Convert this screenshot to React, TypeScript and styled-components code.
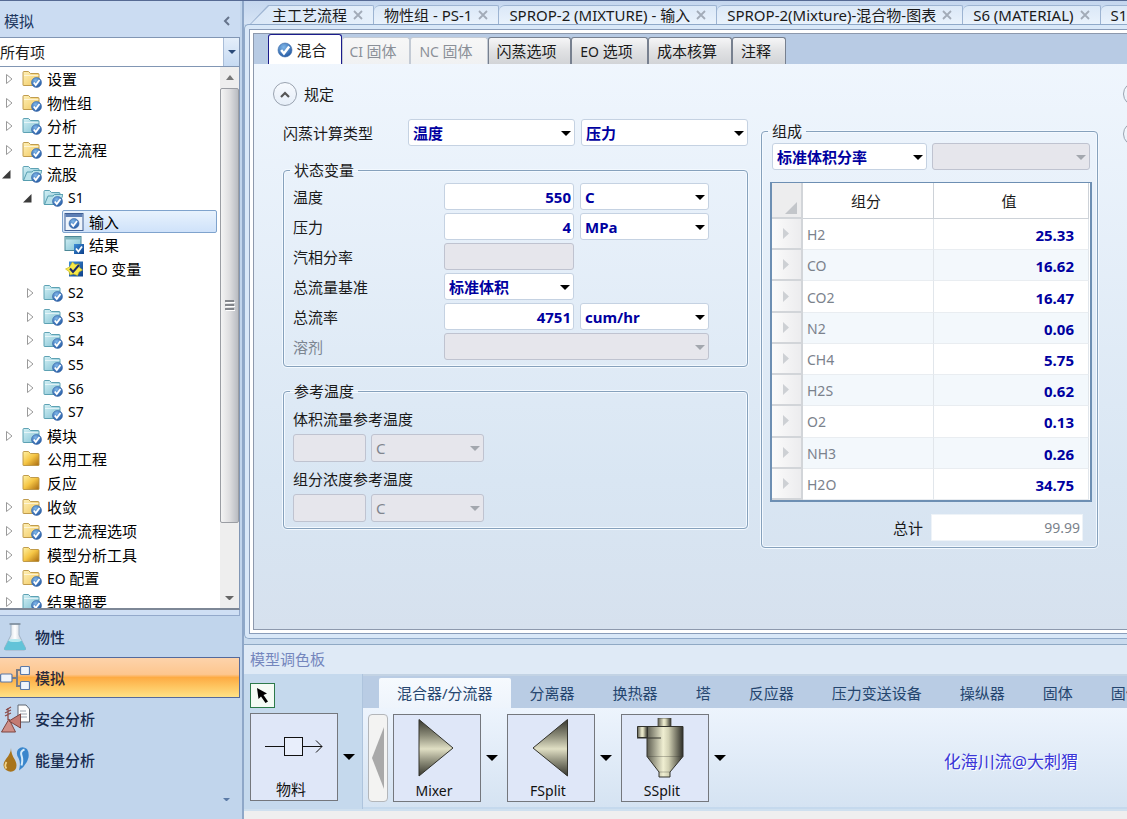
import React, { useState } from 'react';
import styled, { createGlobalStyle, css } from 'styled-components';

const GlobalStyle = createGlobalStyle`
  *, *::before, *::after { box-sizing: border-box; }
  body {
    margin: 0;
    font-family: "Noto Sans", "Noto Sans CJK SC", sans-serif;
    font-size: 15px;
    line-height: 20px;
    color: #1a1a1a;
    background: #c3d6ec;
    overflow: hidden;
  }
  button, input, select { font: inherit; color: inherit; margin: 0; }
  button { background: none; border: 0; padding: 0; cursor: default; }
  ul { list-style: none; margin: 0; padding: 0; }
  svg { display: block; flex: none; }
`;

/* ---------- mixed Latin / Chinese text ---------- */

const Latin = styled.span`
  font-size: 14px;
`;

function Mixed({ text }: { text: string }) {
  const parts = text.split(/([\x20-\x7e]+)/).filter(Boolean);
  return (
    <span>
      {parts.map((p, i) => (/^[\x20-\x7e]/.test(p) ? <Latin key={i}>{p}</Latin> : p))}
    </span>
  );
}

/* ---------- icons ---------- */

function Gradients() {
  return (
    <svg width="0" height="0" style={{ position: 'absolute' }} aria-hidden="true">
      <defs>
        <linearGradient id="g-yellow" x1="0" y1="0" x2="1" y2="1">
          <stop offset="0" stopColor="#fff1b8" />
          <stop offset="1" stopColor="#f0c65c" />
        </linearGradient>
        <linearGradient id="g-gold" x1="0" y1="0" x2="1" y2="1">
          <stop offset="0" stopColor="#fff3a8" />
          <stop offset="0.5" stopColor="#f5c544" />
          <stop offset="1" stopColor="#a86a10" />
        </linearGradient>
        <linearGradient id="g-cyan" x1="0" y1="0" x2="1" y2="1">
          <stop offset="0" stopColor="#d5f1f5" />
          <stop offset="1" stopColor="#7dbfd2" />
        </linearGradient>
        <radialGradient id="g-ball" cx="0.4" cy="0.3" r="0.8">
          <stop offset="0" stopColor="#7fb6e8" />
          <stop offset="1" stopColor="#1a4f9c" />
        </radialGradient>
        <linearGradient id="g-blue" x1="0" y1="0" x2="1" y2="1">
          <stop offset="0" stopColor="#3f8fd8" />
          <stop offset="1" stopColor="#0c3f8a" />
        </linearGradient>
        <linearGradient id="g-coneV" x1="0" y1="0" x2="0" y2="1">
          <stop offset="0" stopColor="#36362e" />
          <stop offset="0.28" stopColor="#8b8b78" />
          <stop offset="0.52" stopColor="#e0dfc4" />
          <stop offset="0.75" stopColor="#8b8b78" />
          <stop offset="1" stopColor="#36362e" />
        </linearGradient>
        <linearGradient id="g-metal" x1="0" y1="0" x2="1" y2="0">
          <stop offset="0" stopColor="#5c5c50" />
          <stop offset="0.45" stopColor="#f0efd2" />
          <stop offset="0.6" stopColor="#d2d1b4" />
          <stop offset="1" stopColor="#2e2e28" />
        </linearGradient>
        <linearGradient id="g-glass" x1="0" y1="0" x2="1" y2="0">
          <stop offset="0" stopColor="#aebccc" />
          <stop offset="0.5" stopColor="#ffffff" />
          <stop offset="1" stopColor="#9fafc2" />
        </linearGradient>
      </defs>
    </svg>
  );
}

type IconKind = 'yellow' | 'gold' | 'cyan' | 'open' | 'form' | 'result' | 'eo';

const Check = ({ cx, cy, r }: { cx: number; cy: number; r: number }) => (
  <g>
    <circle cx={cx} cy={cy} r={r} fill="url(#g-ball)" stroke="#3a6aa8" strokeWidth="0.6" />
    <path
      d={`M${cx - r * 0.55} ${cy}l${r * 0.4} ${r * 0.5}L${cx + r * 0.6} ${cy - r * 0.5}`}
      fill="none"
      stroke="#fff"
      strokeWidth={r * 0.36}
    />
  </g>
);

function TreeIcon({ kind }: { kind: IconKind }) {
  const stroke = kind === 'yellow' || kind === 'gold' ? '#b9923f' : '#4f98ac';
  if (kind === 'form')
    return (
      <svg width="20" height="18" viewBox="0 0 20 18">
        <rect x="1" y="0.5" width="18" height="17" fill="#eef4fb" stroke="#3f5f94" />
        <rect x="1.5" y="1" width="17" height="3" fill="#5d7fb5" />
        <Check cx={10} cy={10.5} r={5} />
      </svg>
    );
  if (kind === 'result')
    return (
      <svg width="20" height="18" viewBox="0 0 20 18">
        <rect x="1" y="0.5" width="16" height="14" fill="url(#g-cyan)" stroke="#4b8796" />
        <rect x="1.5" y="1" width="15" height="2.5" fill="#7fb5bd" />
        <rect x="10" y="8" width="10" height="10" fill="url(#g-blue)" />
        <path d="M12 12.5l2.4 3L18 10.5" fill="none" stroke="#fff" strokeWidth="1.8" />
      </svg>
    );
  if (kind === 'eo')
    return (
      <svg width="20" height="18" viewBox="0 0 20 18">
        <rect x="5" y="1.500" width="14" height="15" fill="url(#g-blue)" />
        <path
          d="M8.500 2l2.500 2.500 4-.5.500 3.500 3 2.500-3.500 2-1.500 3.500-4-1.500-3.500 1-1-3.500L1.500 9l4-2z"
          fill="#f7e948"
          stroke="#c9b414"
          strokeWidth="0.6"
        />
        <path d="M6 8.500l3 3.500 6-7" fill="none" stroke="#1d2b66" strokeWidth="2" />
      </svg>
    );
  return (
    <svg width="20" height="18" viewBox="0 0 20 18">
      <path
        d="M1 2.500q0-1 1-1h4.500l2 2H16q1 0 1 1V15q0 .5-.5.5h-15Q1 15.500 1 15z"
        fill={kind === 'gold' ? 'url(#g-gold)' : kind === 'yellow' ? 'url(#g-yellow)' : 'url(#g-cyan)'}
        stroke={stroke}
        strokeWidth="0.9"
      />
      {kind === 'open' && (
        <path d="M1.500 15.500L5 7h5l1.500-1.500H20l-3.500 10z" fill="#b9e2ea" stroke={stroke} strokeWidth="0.9" />
      )}
      {kind !== 'gold' && kind !== 'open' && <path d="M2 5.500h14.500" stroke="#fff" strokeOpacity="0.6" />}
      {kind !== 'gold' && <Check cx={14.5} cy={12.5} r={5} />}
    </svg>
  );
}

const Caret = ({ w = 10, color = '#000' }: { w?: number; color?: string }) => (
  <svg width={w} height={w / 2} viewBox="0 0 10 5">
    <path d="M0 0h10L5 5z" fill={color} />
  </svg>
);

const Cross = () => (
  <svg width="10" height="10" viewBox="0 0 10 10">
    <path d="M1 1l8 8M9 1l-8 8" stroke="#a2abb8" strokeWidth="1.8" fill="none" />
  </svg>
);

/* ---------- page shell ---------- */

const Shell = styled.div`
  display: grid;
  grid-template-columns: 244px minmax(0, 1fr);
  height: 100vh;
  border-top: 1px solid #566a94;
`;

const Sidebar = styled.aside`
  display: flex;
  flex-direction: column;
  min-height: 0;
  background: #c1d5ec;
  border-right: 2px solid #8ea7c8;
  padding-right: 2px;
`;

const SideHeader = styled.header`
  display: flex;
  align-items: center;
  justify-content: space-between;
  height: 36px;
  padding: 3px 10px 0 4px;
  background: #cbdcf2;
  color: #20375f;
  flex: none;
`;

const FilterBox = styled.label`
  position: relative;
  display: block;
  height: 30px;
  flex: none;
  border: 1px solid #8196b4;
  border-left: 0;
  background: #fff;
  select {
    appearance: none;
    width: 100%;
    height: 28px;
    border: 0;
    outline: 0;
    padding: 0 20px 0 0;
    background: transparent;
  }
`;

const FilterArrow = styled.span`
  position: absolute;
  top: 0;
  right: 0;
  width: 16px;
  height: 28px;
  display: grid;
  place-items: center;
  border-left: 1px solid #a9bdd8;
  background: linear-gradient(#e4eefa, #c6daf2);
  pointer-events: none;
`;

const TreeArea = styled.div`
  display: flex;
  flex: 1;
  min-height: 0;
  overflow: hidden;
  background: #fff;
  border-right: 1px solid #8196b4;
  border-bottom: 2px solid #7d8796;
`;

const TreeList = styled.ul`
  flex: 1;
  min-width: 0;
  height: 547px;
  display: grid;
  grid-auto-rows: 1fr;
  padding-right: 3px;
`;

const TreeRow = styled.li<{ $level: number }>`
  display: flex;
  align-items: stretch;
  padding-left: ${(p) => p.$level * 21}px;
  white-space: nowrap;
  min-height: 0;
`;

const Twisty = styled.button`
  width: 20px;
  display: grid;
  align-items: center;
  padding-left: 5px;
  flex: none;
`;

const TreeLabel = styled.button<{ $on?: boolean }>`
  display: flex;
  align-items: center;
  gap: 5px;
  padding: 0 8px 0 1px;
  border: 1px solid transparent;
  border-radius: 2px;
  text-align: left;
  color: #000;
  ${(p) =>
    p.$on &&
    css`
      flex: 1;
      border-color: #7fa3cd;
      background: linear-gradient(#e8f2fd, #cfe2fa);
    `}
`;

const ScrollTrack = styled.div`
  width: 19px;
  display: flex;
  flex-direction: column;
  align-items: center;
  background: #eeeeee;
  padding-bottom: 8px;
  gap: 8px;
`;

const ScrollThumb = styled.div`
  width: 19px;
  flex: 0 1 435px;
  border: 1px solid #9a9da3;
  border-radius: 2px;
  background: linear-gradient(90deg, #f4f4f4, #dedee0 50%, #b9bcc2);
  display: grid;
  place-items: center;
`;

const ScrollEnd = styled.span<{ $grow?: boolean }>`
  display: flex;
  align-items: flex-end;
  height: 13px;
  flex: ${(p) => (p.$grow ? '1 0 13px' : 'none')};
`;

const Splitter = styled.div`
  height: 6px;
  flex: none;
  border: 1px solid #93a9cb;
  border-width: 0 1px 1px 0;
  background: #cfdff4;
`;

const ModeNav = styled.nav`
  flex: none;
  display: flex;
  flex-direction: column;
`;

const ModeButton = styled.button<{ $on?: boolean }>`
  display: flex;
  align-items: center;
  gap: 5px;
  height: 41px;
  font-weight: 500;
  color: #16294d;
  border: 1px solid transparent;
  border-left: 0;
  ${(p) =>
    p.$on &&
    css`
      color: #2c2a3a;
      border-color: #54699b;
      background: linear-gradient(#fdd3ab, #fdc68e 42%, #fdab43 50%, #fec45f 72%, #fee186);
    `}
`;

const NavFoot = styled.div`
  height: 39px;
  display: flex;
  justify-content: flex-end;
  align-items: center;
  padding-right: 10px;
`;

/* ---------- document area ---------- */

const Main = styled.main`
  display: flex;
  flex-direction: column;
  min-width: 0;
  min-height: 0;
  overflow: hidden;
  background: #c9dbee;
`;

const DocTabs = styled.div`
  display: flex;
  flex: none;
  height: 23px;
  padding: 4px 0 0 6px;
  background: linear-gradient(#c4d6ee, #d6e4f5);
`;

const DocTab = styled.div<{ $first?: boolean }>`
  display: flex;
  flex: none;
  align-items: center;
  gap: 6px;
  padding: 0 10px;
  white-space: nowrap;
  border: 1px solid #9db4d2;
  border-width: 1px 1px 0 0;
  border-radius: 6px 2px 0 0;
  background: linear-gradient(#dbe8f7, #e9f2fc);
  ${(p) =>
    p.$first &&
    css`
      padding-left: 22px;
      border-top-left-radius: 0;
      clip-path: polygon(18px 0, 100% 0, 100% 100%, 0 100%);
      background: linear-gradient(135deg, #9db4d2 13px, #dbe8f7 14px, #e6f0fb);
    `}
`;

const DocFrame = styled.section`
  flex: 1;
  min-height: 0;
  display: flex;
  border: 1px solid #8fa9c9;
  border-right: 0;
  border-radius: 5px 0 0 5px;
  background: #d9e8f8;
  padding: 4px 0 4px 4px;
`;

const DocRing = styled.div`
  flex: 1;
  min-width: 0;
  display: flex;
  border: 1px solid #8a9dba;
  border-right: 0;
  background: #fff;
  padding: 3px 0 3px 3px;
`;

const DocBody = styled.div`
  flex: 1;
  min-width: 0;
  display: flex;
  flex-direction: column;
  overflow: hidden;
  border: 1px solid #8d99ad;
  border-right: 0;
  background: linear-gradient(#f1f7fe, #d9e6f3 75%, #d6e1ee);
`;

const FormTabs = styled.div`
  display: flex;
  flex: none;
  align-items: flex-end;
  height: 30px;
  padding-left: 14px;
  background: #b8cbe4;
`;

const FormTab = styled.button<{ $state?: 'on' | 'off'; $w: number }>`
  display: flex;
  align-items: center;
  justify-content: center;
  gap: 3px;
  width: ${(p) => p.$w}px;
  height: 27px;
  padding-right: 6px;
  border: 1px solid #77808f;
  border-width: 1px 1px 0 1px;
  border-radius: 3px 3px 0 0;
  background: linear-gradient(#f6f6f7, #e2e3e5 45%, #d2d4d7);
  color: #1a1a1a;
  white-space: nowrap;
  ${(p) =>
    p.$state === 'on' &&
    css`
      height: 30px;
      border-color: #1c1c8c;
      background: #fff;
    `}
  ${(p) =>
    p.$state === 'off' &&
    css`
      border-color: #c3cad4;
      background: linear-gradient(#f7f7f7, #f0f1f2);
      color: #8b9098;
    `}
`;

const Form = styled.div`
  flex: 1;
  padding: 18px 0 0 19px;
`;

const SectionHead = styled.div`
  display: flex;
  align-items: center;
`;

const Round = styled.button<{ $rail?: boolean }>`
  width: 24px;
  height: 24px;
  flex: none;
  display: grid;
  place-items: center;
  border: 1px solid #9aa3b0;
  border-radius: 50%;
  background: linear-gradient(#f7fafe, #e6eef8);
  ${(p) => p.$rail && 'margin-left: 25px;'}
`;

const HeadText = styled.span`
  width: 801px;
  padding-left: 7px;
  flex: none;
`;

const Columns = styled.div`
  display: flex;
  align-items: flex-start;
  padding: 13px 0 0 10px;
`;

const LeftColumn = styled.div`
  width: 465px;
  flex: none;
  display: flex;
  flex-direction: column;
  gap: 14px;
`;

const FlashRow = styled.div`
  display: grid;
  grid-template-columns: 119px 1fr 1fr;
  gap: 6px;
  align-items: center;
`;

const Group = styled.fieldset`
  margin: 0;
  min-width: 0;
  padding: 3px 8px 6px 6px;
  border: 1px solid #86a1bc;
  border-radius: 4px;
  box-shadow: 0 0 0 1px #f3f9ff, inset 0 0 0 1px #f3f9ff;
  legend {
    padding: 0 4px;
    line-height: 20px;
  }
`;

const StateGrid = styled.div`
  display: grid;
  grid-template-columns: 145px 130px 129px;
  gap: 3px 6px;
  align-items: center;
  padding-left: 3px;
`;

const RefBlock = styled.div`
  padding: 0 3px;
  label {
    display: block;
    line-height: 30px;
  }
`;

const RefFields = styled.div`
  display: grid;
  grid-template-columns: 73px 113px;
  gap: 5px;
  padding-bottom: 2px;
  &:last-child { padding-bottom: 0; }
  input, select { height: 28px; }
`;

const FieldLabel = styled.label<{ $dim?: boolean }>`
  color: ${(p) => (p.$dim ? '#7c8590' : '#1a1a1a')};
`;

const fieldLook = css<{ $dim?: boolean }>`
  width: 100%;
  height: 27px;
  border: 1px solid ${(p) => (p.$dim ? '#bfc3d0' : '#c5d2e2')};
  border-radius: 3px;
  background: ${(p) => (p.$dim ? '#e6e6ec' : '#fff')};
  color: ${(p) => (p.$dim ? '#80858e' : '#0000a0')};
  font-weight: ${(p) => (p.$dim ? 400 : 700)};
  outline: 0;
  opacity: 1;
`;

const NumberField = styled.input<{ $dim?: boolean }>`
  ${fieldLook}
  text-align: right;
  padding: 0 2px;
`;

const SelectField = styled.select<{ $dim?: boolean }>`
  ${fieldLook}
  display: block;
  appearance: none;
  padding: 0 18px 0 4px;
`;

const SelectWrap = styled.span<{ $span?: boolean }>`
  position: relative;
  display: block;
  ${(p) => p.$span && 'grid-column: span 2;'}
  svg {
    position: absolute;
    right: 4px;
    top: 12px;
    pointer-events: none;
  }
`;

function Drop({ id, value, label, dim, span }: { id?: string; value?: string; label?: string; dim?: boolean; span?: boolean }) {
  return (
    <SelectWrap $span={span}>
      <SelectField id={id} aria-label={label} $dim={dim} disabled={dim}>
        <option>{value ?? ''}</option>
      </SelectField>
      <Caret color={dim ? '#a3a7ae' : '#000'} />
    </SelectWrap>
  );
}

const Composition = styled(Group)`
  width: 337px;
  flex: none;
  margin: 2px 0 0 13px;
  padding: 2px 5px 6px 6px;
`;

const CompSelects = styled.div`
  display: grid;
  grid-template-columns: 155px 158px;
  gap: 5px;
  padding: 0 0 12px 4px;
`;

const TableBox = styled.div`
  margin-left: 2px;
  border: 2px solid #6d8fb3;
  border-width: 1px 2px 2px 2px;
  background: #fff;
  padding-right: 1px;
`;

const Table = styled.table`
  width: 100%;
  height: 317px;
  table-layout: fixed;
  border-collapse: separate;
  border-spacing: 0;
  color: #7b828c;
  th {
    height: 36px;
    padding: 0 4px 0 0;
    font-weight: 400;
    color: #1a1a1a;
    border-right: 1px solid #cdd2d8;
    border-bottom: 1px solid #cdd2d8;
  }
  td {
    padding: 2px 0 0 4px;
    font-size: 14px;
    border-right: 1px solid #e1e6eb;
    border-bottom: 1px solid #e9edf1;
  }
  tbody tr:nth-child(even) td { background: #f3f8fc; }
  td:last-child {
    padding: 2px 14px 0 0;
    text-align: right;
    font-size: 15px;
    font-weight: 700;
    color: #0000a0;
  }
  th:first-child, tbody tr td:first-child {
    padding: 0 0 0 10px;
    background: linear-gradient(90deg, #fbfbfb, #ececee);
    border-right: 2px solid #d2d5d9;
    border-bottom: 2px solid #d2d5d9;
  }
  th:first-child { background: #ededee; }
`;

const TotalRow = styled.div`
  display: flex;
  justify-content: flex-end;
  align-items: center;
  gap: 8px;
  padding: 12px 9px 0 0;
  input {
    width: 152px;
    height: 27px;
    border: 1px solid #eef3f8;
    background: #fff;
    text-align: right;
    padding: 0 2px;
    font-size: 14px;
    color: #7b828c;
    outline: 0;
  }
`;

const Rail = styled.div`
  padding-top: 3px;
`;

/* ---------- model palette ---------- */

const Palette = styled.section`
  flex: none;
  margin-top: 5px;
  border-top: 1px solid #8fa9c4;
  border-bottom: 8px solid #efefef;
`;

const PaletteTitle = styled.header`
  height: 29px;
  padding: 4px 6px 0;
  background: #dfeaf6;
  color: #7486bd;
`;

const PaletteBody = styled.div`
  display: flex;
  background: #c5d9ed;
  border-bottom: 2px solid #cfe0ef;
`;

const StreamSide = styled.div`
  width: 118px;
  flex: none;
  padding: 9px 0 8px 6px;
  display: flex;
  flex-direction: column;
  gap: 5px;
`;

const PointerButton = styled.button`
  width: 25px;
  height: 25px;
  border: 1px solid #2c7a4a;
  background: #f4fbf5;
  display: grid;
  place-items: center;
`;

const ModelRow = styled.div`
  display: flex;
  align-items: center;
`;

const ModelButton = styled.button`
  width: 88px;
  height: 88px;
  flex: none;
  display: flex;
  flex-direction: column;
  align-items: center;
  border: 1px solid #74777d;
  background: #dfe7f8;
  padding-right: 6px;
  color: #111;
  svg { margin: 3px -6px 2px 0; }
`;

const ModelDrop = styled.button`
  width: 26px;
  height: 88px;
  display: grid;
  place-items: center;
  flex: none;
  padding-right: 4px;
`;

const Library = styled.div`
  flex: 1;
  min-width: 0;
  border-left: 1px solid #aec4dd;
`;

const LibTabs = styled.div`
  display: flex;
  align-items: flex-end;
  height: 34px;
  padding-left: 16px;
  background: #b9cce4;
  border-top: 2px solid #c3d3e4;
  overflow: hidden;
`;

const LibTab = styled.button<{ $on?: boolean }>`
  height: 30px;
  flex: none;
  padding: 0 ${(p) => (p.$on ? 18 : 19)}px;
  white-space: nowrap;
  color: #25466f;
  ${(p) =>
    p.$on &&
    css`
      background: linear-gradient(#f6fafe, #eef4fc);
      border-radius: 2px 2px 0 0;
    `}
`;

const LibPanel = styled.div`
  display: flex;
  align-items: center;
  height: 99px;
  padding: 0 0 0 5px;
  background: linear-gradient(#edf4fd, #d5e3f2);
`;

const PageBack = styled.button`
  width: 20px;
  height: 88px;
  flex: none;
  margin-right: 5px;
  display: grid;
  place-items: center;
  border: 1px solid #b3b6ba;
  border-radius: 4px;
  background: #f3f3f2;
`;

const Signature = styled.span`
  margin-left: auto;
  padding: 8px 49px 0 0;
  font-size: 17px;
  color: #3a36d8;
  text-shadow: 1px 1px 0 #fff;
  white-space: nowrap;
`;

/* ---------- data ---------- */

const TREE: [string, number, IconKind, 'closed' | 'open' | 'leaf'][] = [
  ['设置', 0, 'yellow', 'closed'],
  ['物性组', 0, 'yellow', 'closed'],
  ['分析', 0, 'cyan', 'closed'],
  ['工艺流程', 0, 'yellow', 'closed'],
  ['流股', 0, 'open', 'open'],
  ['S1', 1, 'open', 'open'],
  ['输入', 2, 'form', 'leaf'],
  ['结果', 2, 'result', 'leaf'],
  ['EO 变量', 2, 'eo', 'leaf'],
  ['S2', 1, 'cyan', 'closed'],
  ['S3', 1, 'cyan', 'closed'],
  ['S4', 1, 'cyan', 'closed'],
  ['S5', 1, 'cyan', 'closed'],
  ['S6', 1, 'cyan', 'closed'],
  ['S7', 1, 'cyan', 'closed'],
  ['模块', 0, 'cyan', 'closed'],
  ['公用工程', 0, 'gold', 'leaf'],
  ['反应', 0, 'gold', 'leaf'],
  ['收敛', 0, 'yellow', 'closed'],
  ['工艺流程选项', 0, 'yellow', 'closed'],
  ['模型分析工具', 0, 'gold', 'closed'],
  ['EO 配置', 0, 'yellow', 'closed'],
  ['结果摘要', 0, 'cyan', 'closed'],
];

const DOCS = ['主工艺流程', '物性组 - PS-1', 'SPROP-2 (MIXTURE) - 输入', 'SPROP-2(Mixture)-混合物-图表', 'S6 (MATERIAL)', 'S1'];

const COMPONENTS = [
  ['H2', '25.33'],
  ['CO', '16.62'],
  ['CO2', '16.47'],
  ['N2', '0.06'],
  ['CH4', '5.75'],
  ['H2S', '0.62'],
  ['O2', '0.13'],
  ['NH3', '0.26'],
  ['H2O', '34.75'],
];

const LIBRARY = ['混合器/分流器', '分离器', '换热器', '塔', '反应器', '压力变送设备', '操纵器', '固体', '固体'];

/* ---------- larger drawings ---------- */

const Flask = () => (
  <svg width="30" height="30" viewBox="0 0 30 30">
    <path d="M11 2v11L4.500 26q-.8 2 1.500 2h18q2.300 0 1.500-2L19 13V2z" fill="url(#g-glass)" stroke="#95a8bd" strokeWidth="0.8" />
    <path d="M8.500 18.500h13l4 7.500q.8 2-1.500 2H6q-2.300 0-1.500-2z" fill="#62c3d8" />
    <ellipse cx="15" cy="18.500" rx="6.500" ry="1.600" fill="#b7e8ef" />
    <path d="M9.500 2h11" stroke="#7d8c9c" strokeWidth="1.600" />
  </svg>
);

const Flowsheet = () => (
  <svg width="30" height="30" viewBox="0 0 30 30">
    <path d="M12 15h5M21 7h-4v16h4" fill="none" stroke="#7d7d84" strokeWidth="2" />
    <g fill="#f1f5fb" stroke="#5b79a8" strokeWidth="1.200">
      <rect x="0.600" y="11" width="11.400" height="8" rx="1" />
      <rect x="20.500" y="3.500" width="9" height="8" rx="1" />
      <rect x="20.500" y="18.500" width="9" height="8" rx="1" />
    </g>
  </svg>
);

const Safety = () => (
  <svg width="30" height="30" viewBox="0 0 30 30">
    <path d="M18 1h8l3.500 4v13H18z" fill="#fdfdfd" stroke="#5e6672" />
    <path d="M20 7h6M20 10h7M20 13h7" stroke="#9aa3b0" />
    <path d="M8 16V4M5 12l6-3M5 9l6-3M6 6l5-3" stroke="#8b4a48" strokeWidth="1.300" />
    <path d="M9 15l-7.500 13h14z" fill="#cf8f88" stroke="#7c4441" />
    <path d="M9 17l11.500-7v14z" fill="#c37a72" stroke="#7c4441" />
  </svg>
);

const Energy = () => (
  <svg width="30" height="30" viewBox="0 0 30 30">
    <path d="M11 3q0 5-5 11-5 7 0 11 5 3.500 9 0 3-4 0-10-4-6-4-12z" fill="#a8741c" />
    <path d="M6.500 17q-2.500 4 0 6.500" fill="none" stroke="#f0d28c" strokeWidth="1.800" />
    <path d="M27 4q-5-3.500-9 .5-2.500 4 .5 8.500 2.500 5 .5 12.500 7.500-5 9.500-13 .8-5-1.500-8.500z" fill="#3a86cc" />
    <path d="M24.500 4.500q-4.500 1.500-3 6 1.500 4.500 0 10" fill="none" stroke="#d4ebfb" strokeWidth="2" />
  </svg>
);

const StreamDrawing = () => (
  <svg width="60" height="60" viewBox="0 0 60 60">
    <path d="M1 29.500h20M39 29.500h19M52 23.500l6 6-6 6" fill="none" stroke="#111" />
    <rect x="20.500" y="20.500" width="18" height="18" fill="#e8eefb" stroke="#111" />
  </svg>
);

const MixerDrawing = () => (
  <svg width="60" height="60" viewBox="0 0 60 60">
    <path d="M12 1.500L46 30 12 58z" fill="url(#g-coneV)" stroke="#33332c" />
  </svg>
);

const FSplitDrawing = () => (
  <svg width="60" height="60" viewBox="0 0 60 60">
    <path d="M46.500 1.500L12 30l34.500 28z" fill="url(#g-coneV)" stroke="#33332c" />
  </svg>
);

const SSplitDrawing = () => (
  <svg width="60" height="60" viewBox="0 0 60 60">
    <path d="M23 0h13v9H23z" fill="url(#g-metal)" stroke="#4c4c42" strokeWidth="0.800" />
    <path d="M12 8.500h36v30L35 54v5H24v-5L12 38.500z" fill="url(#g-metal)" stroke="#33332c" />
    <path d="M2.500 8.500h10v11h-10z" fill="url(#g-metal)" stroke="#33332c" />
    <path d="M2 20h24" fill="none" stroke="#33332c" />
    <path d="M12 38.500h36M24 54h11" fill="none" stroke="#33332c" strokeWidth="0.500" strokeOpacity="0.600" />
  </svg>
);

function Model({ name, children }: { name: string; children: React.ReactNode }) {
  return (
    <ModelRow>
      <ModelButton>
        {children}
        <Mixed text={name} />
      </ModelButton>
      <ModelDrop aria-label={name}>
        <Caret w={12} />
      </ModelDrop>
    </ModelRow>
  );
}

/* ---------- app ---------- */

export default function App() {
  const [selected, setSelected] = useState('输入');
  const [mode, setMode] = useState('模拟');
  const modes: [string, React.ReactNode][] = [
    ['物性', <Flask />],
    ['模拟', <Flowsheet />],
    ['安全分析', <Safety />],
    ['能量分析', <Energy />],
  ];

  return (
    <>
      <GlobalStyle />
      <Gradients />
      <Shell>
        <Sidebar>
          <SideHeader>
            <span>模拟</span>
            <button aria-label="折叠">
              <svg width="7" height="10" viewBox="0 0 7 10">
                <path d="M6 1L2 5l4 4" fill="none" stroke="#66748c" strokeWidth="2" />
              </svg>
            </button>
          </SideHeader>
          <FilterBox>
            <select aria-label="筛选">
              <option>所有项</option>
            </select>
            <FilterArrow>
              <Caret w={8} color="#2b4a78" />
            </FilterArrow>
          </FilterBox>
          <TreeArea>
            <TreeList>
              {TREE.map(([name, level, icon, state]) => (
                <TreeRow key={name} $level={level}>
                  <Twisty aria-label={name} tabIndex={-1}>
                    {state === 'closed' && (
                      <svg width="9" height="12" viewBox="0 0 9 12">
                        <path d="M1.500 1.500v9L7 6z" fill="#fff" stroke="#9a9a9a" />
                      </svg>
                    )}
                    {state === 'open' && (
                      <svg width="9" height="12" viewBox="3 0 9 12" overflow="visible">
                        <path d="M8.500 2v8.500H0z" fill="#3b3b3b" />
                      </svg>
                    )}
                  </Twisty>
                  <TreeLabel $on={selected === name} onClick={() => setSelected(name)}>
                    <TreeIcon kind={icon} />
                    <Mixed text={name} />
                  </TreeLabel>
                </TreeRow>
              ))}
            </TreeList>
            <ScrollTrack>
              <ScrollEnd>
                <svg width="8" height="5" viewBox="0 0 8 5">
                  <path d="M0 5l4-5 4 5z" fill="#777" />
                </svg>
              </ScrollEnd>
              <ScrollThumb>
                <svg width="10" height="11" viewBox="0 0 10 11">
                  <path d="M0 1h9M0 5h9M0 9h9" stroke="#666a70" strokeWidth="1.500" />
                  <path d="M1 2.500h9M1 6.500h9M1 10.500h9" stroke="#fff" />
                </svg>
              </ScrollThumb>
              <ScrollEnd $grow>
                <Caret w={9} color="#666" />
              </ScrollEnd>
            </ScrollTrack>
          </TreeArea>
          <Splitter />
          <ModeNav>
            {modes.map(([name, icon]) => (
              <ModeButton key={name} $on={mode === name} onClick={() => setMode(name)}>
                {icon}
                {name}
              </ModeButton>
            ))}
          </ModeNav>
          <NavFoot>
            <Caret w={7} color="#5b7aa6" />
          </NavFoot>
        </Sidebar>

        <Main>
          <DocTabs>
            {DOCS.map((d, i) => (
              <DocTab key={d} $first={i === 0}>
                <span>{d}</span>
                <button aria-label={'关闭 ' + d}>
                  <Cross />
                </button>
              </DocTab>
            ))}
          </DocTabs>

          <DocFrame>
            <DocRing>
              <DocBody>
                <FormTabs>
                  <FormTab $state="on" $w={74}>
                    <svg width="16" height="16" viewBox="0 0 16 16">
                      <Check cx={8} cy={8} r={7} />
                    </svg>
                    混合
                  </FormTab>
                  <FormTab $state="off" $w={68}><Mixed text="CI 固体" /></FormTab>
                  <FormTab $state="off" $w={78}><Mixed text="NC 固体" /></FormTab>
                  <FormTab $w={83}>闪蒸选项</FormTab>
                  <FormTab $w={77}><Mixed text="EO 选项" /></FormTab>
                  <FormTab $w={84}>成本核算</FormTab>
                  <FormTab $w={54}>注释</FormTab>
                </FormTabs>
                <Form>
                  <SectionHead>
                    <Round aria-label="收起">
                      <svg width="10" height="7" viewBox="0 0 10 7">
                        <path d="M1 6l4-4 4 4" fill="none" stroke="#555" strokeWidth="2.200" />
                      </svg>
                    </Round>
                    <HeadText>规定</HeadText>
                    <Round $rail aria-label="展开" />
                  </SectionHead>
                  <Columns>
                    <LeftColumn>
                      <FlashRow>
                        <FieldLabel htmlFor="flash1">闪蒸计算类型</FieldLabel>
                        <Drop id="flash1" value="温度" />
                        <Drop label="闪蒸计算类型 2" value="压力" />
                      </FlashRow>
                      <Group>
                        <legend>状态变量</legend>
                        <StateGrid>
                          <FieldLabel htmlFor="temp">温度</FieldLabel>
                          <NumberField id="temp" defaultValue="550" />
                          <Drop label="温度单位" value="C" />
                          <FieldLabel htmlFor="pres">压力</FieldLabel>
                          <NumberField id="pres" defaultValue="4" />
                          <Drop label="压力单位" value="MPa" />
                          <FieldLabel htmlFor="vfrac">汽相分率</FieldLabel>
                          <NumberField id="vfrac" $dim disabled />
                          <span />
                          <FieldLabel htmlFor="basis">总流量基准</FieldLabel>
                          <Drop id="basis" value="标准体积" />
                          <span />
                          <FieldLabel htmlFor="flow">总流率</FieldLabel>
                          <NumberField id="flow" defaultValue="4751" />
                          <Drop label="流率单位" value="cum/hr" />
                          <FieldLabel $dim htmlFor="solvent">溶剂</FieldLabel>
                          <Drop id="solvent" dim span />
                        </StateGrid>
                      </Group>
                      <Group>
                        <legend>参考温度</legend>
                        <RefBlock>
                          <label htmlFor="ref1">体积流量参考温度</label>
                          <RefFields>
                            <NumberField id="ref1" $dim disabled />
                            <Drop label="体积流量参考温度单位" value="C" dim />
                          </RefFields>
                          <label htmlFor="ref2">组分浓度参考温度</label>
                          <RefFields>
                            <NumberField id="ref2" $dim disabled />
                            <Drop label="组分浓度参考温度单位" value="C" dim />
                          </RefFields>
                        </RefBlock>
                      </Group>
                    </LeftColumn>

                    <Composition>
                      <legend>组成</legend>
                      <CompSelects>
                        <Drop label="组成基准" value="标准体积分率" />
                        <Drop label="组成单位" dim />
                      </CompSelects>
                      <TableBox>
                        <Table>
                          <colgroup>
                            <col style={{ width: 31 }} />
                            <col style={{ width: 131 }} />
                            <col />
                          </colgroup>
                          <thead>
                            <tr>
                              <th>
                                <svg width="18" height="34" viewBox="0 0 18 34">
                                  <path d="M15 19v12H3z" fill="#c3c6ca" />
                                </svg>
                              </th>
                              <th>组分</th>
                              <th>值</th>
                            </tr>
                          </thead>
                          <tbody>
                            {COMPONENTS.map(([name, value]) => (
                              <tr key={name}>
                                <td>
                                  <svg width="8" height="11" viewBox="0 0 8 11">
                                    <path d="M1 0v11l6-5.500z" fill="#cdd0d4" />
                                  </svg>
                                </td>
                                <td>{name}</td>
                                <td>{value}</td>
                              </tr>
                            ))}
                          </tbody>
                        </Table>
                      </TableBox>
                      <TotalRow>
                        <label htmlFor="total">总计</label>
                        <input id="total" readOnly value="99.99" />
                      </TotalRow>
                    </Composition>
                    <Rail>
                      <Round $rail aria-label="展开" />
                    </Rail>
                  </Columns>
                </Form>
              </DocBody>
            </DocRing>
          </DocFrame>

          <Palette>
            <PaletteTitle>模型调色板</PaletteTitle>
            <PaletteBody>
              <StreamSide>
                <PointerButton aria-label="选择">
                  <svg width="14" height="17" viewBox="0 0 14 17">
                    <path d="M1 1l10 5.500-3.500 1.500 4.500 6.500-2.500 1.500L5 9.500 2.500 12z" fill="#000" />
                  </svg>
                </PointerButton>
                <Model name="物料">
                  <StreamDrawing />
                </Model>
              </StreamSide>
              <Library>
                <LibTabs>
                  {LIBRARY.map((t, i) => (
                    <LibTab key={i} $on={i === 0}>
                      {t}
                    </LibTab>
                  ))}
                </LibTabs>
                <LibPanel>
                  <PageBack aria-label="上一页">
                    <svg width="14" height="62" viewBox="0 0 14 62">
                      <path d="M13 0v62L1 31z" fill="#a9a9a9" />
                    </svg>
                  </PageBack>
                  <Model name="Mixer">
                    <MixerDrawing />
                  </Model>
                  <Model name="FSplit">
                    <FSplitDrawing />
                  </Model>
                  <Model name="SSplit">
                    <SSplitDrawing />
                  </Model>
                  <Signature>化海川流@大刺猬</Signature>
                </LibPanel>
              </Library>
            </PaletteBody>
          </Palette>
        </Main>
      </Shell>
    </>
  );
}
